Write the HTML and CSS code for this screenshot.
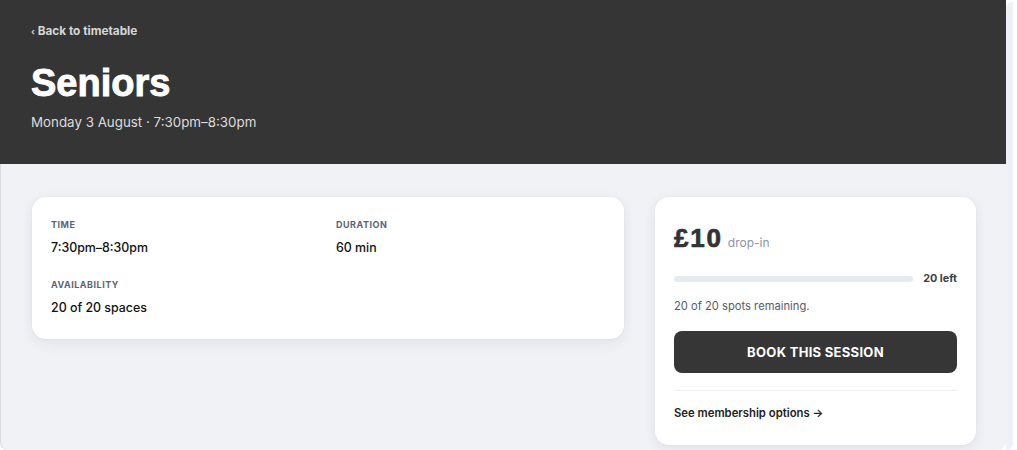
FILE: index.html
```html
<!DOCTYPE html>
<html lang="en">
<head>
<meta charset="utf-8">
<title>Seniors</title>
<link rel="stylesheet" href="styles.css">
</head>
<body>
<div class="frame">
  <header class="hero">
    <a class="back" href="#"><span class="chev">‹</span> Back to timetable</a>
    <h1 class="title">Seniors</h1>
    <p class="subtitle">Monday 3 August · 7:30pm–8:30pm</p>
  </header>
  <main class="content">
    <section class="card details">
      <div class="field">
        <div class="label">Time</div>
        <div class="value">7:30pm–8:30pm</div>
      </div>
      <div class="field">
        <div class="label">Duration</div>
        <div class="value">60 min</div>
      </div>
      <div class="field">
        <div class="label">Availability</div>
        <div class="value">20 of 20 spaces</div>
      </div>
    </section>
    <aside class="card booking">
      <div class="price-row">
        <span class="price">£10</span>
        <span class="price-note">drop-in</span>
      </div>
      <div class="bar-row">
        <div class="bar"></div>
        <span class="left">20 left</span>
      </div>
      <p class="remaining">20 of 20 spots remaining.</p>
      <button class="book">BOOK THIS SESSION</button>
      <hr class="divider">
      <a class="membership" href="#">See membership options →</a>
    </aside>
  </main>
</div>
<div class="strip"></div>
</body>
</html>
```

FILE: styles.css
```css
html, body {
  margin: 0;
  padding: 0;
  background: #ffffff;
}
body {
  display: flex;
  align-items: flex-start;
  width: 1017px;
  height: 450px;
  overflow: hidden;
  font-family: "Inter", "Noto Sans", sans-serif;
}
.frame {
  width: 1006px;
  height: 450px;
  background: #f1f2f6;
  border-radius: 0 0 8px 8px;
  overflow: hidden;
  box-shadow: inset 1px 0 0 #d9dbe0;
  flex: none;
}
.strip {
  width: 7px;
  height: 448px;
  margin-top: 2px;
  background: #eef1f5;
  border-radius: 6px 0 6px 0;
  flex: none;
}
.hero {
  background: #353535;
  height: 164px;
  box-sizing: border-box;
  padding: 24px 31px 0;
  color: #ffffff;
}
.back {
  display: block;
  font-size: 11.8px;
  line-height: 14px;
  font-weight: 700;
  color: #d6d6d6;
  text-decoration: none;
}
.chev {
  font-size: 9px;
}
.title {
  margin: 21px 0 0;
  font-family: "Liberation Sans", Arial, sans-serif;
  font-weight: 700;
  font-size: 38px;
  line-height: 47px;
  letter-spacing: 0;
  -webkit-text-stroke: 0.9px #ffffff;
  color: #ffffff;
}
.subtitle {
  margin: 5px 0 0;
  font-size: 13.35px;
  line-height: 20px;
  color: #dddddd;
}
.content {
  display: grid;
  grid-template-columns: 592px 321px;
  column-gap: 31px;
  align-items: start;
  padding: 33px 0 0 32px;
}
.card {
  background: #ffffff;
  border-radius: 14px;
  box-shadow: 0 4px 14px rgba(30, 40, 70, 0.08), 0 0 0 1px rgba(30, 40, 70, 0.02);
}
.details {
  display: grid;
  grid-template-columns: 1fr 1fr;
  gap: 22px 16px;
  padding: 22px 19px 22px;
}
.label {
  font-size: 9px;
  line-height: 12px;
  font-weight: 700;
  letter-spacing: 0.5px;
  text-transform: uppercase;
  color: #5b6477;
  margin-bottom: 8px;
}
.value {
  font-size: 12.4px;
  line-height: 18px;
  font-weight: 500;
  color: #111111;
}
.booking {
  padding: 26px 19px 24px;
  display: flex;
  flex-direction: column;
}
.price-row {
  display: flex;
  align-items: baseline;
  gap: 5px;
  height: 30px;
}
.price {
  font-family: "Liberation Sans", Arial, sans-serif;
  font-weight: 700;
  font-size: 26px;
  line-height: 30px;
  letter-spacing: 1.8px;
  -webkit-text-stroke: 0.7px #333333;
  color: #333333;
}
.price-note {
  font-size: 12px;
  color: #8e94a3;
}
.bar-row {
  display: flex;
  align-items: center;
  gap: 10px;
  margin-top: 19px;
  height: 14px;
}
.bar {
  flex: 1;
  height: 6px;
  border-radius: 3px;
  background: #e6e9f0;
}
.left {
  font-size: 10.8px;
  line-height: 14px;
  font-weight: 700;
  color: #3b3f48;
}
.remaining {
  margin: 12px 0 0;
  font-size: 11.2px;
  line-height: 16px;
  color: #555c6b;
}
.book {
  margin-top: 17px;
  height: 42px;
  border: none;
  border-radius: 8px;
  background: #363636;
  color: #ffffff;
  font-family: "Inter", "Noto Sans", sans-serif;
  font-size: 13px;
  font-weight: 700;
  letter-spacing: 0.3px;
  cursor: pointer;
}
.divider {
  margin: 17px 0 0;
  border: none;
  border-top: 1px solid #eceef2;
  height: 0;
}
.membership {
  margin-top: 14px;
  font-size: 11.3px;
  line-height: 16px;
  font-weight: 600;
  color: #222222;
  text-decoration: none;
}
```
